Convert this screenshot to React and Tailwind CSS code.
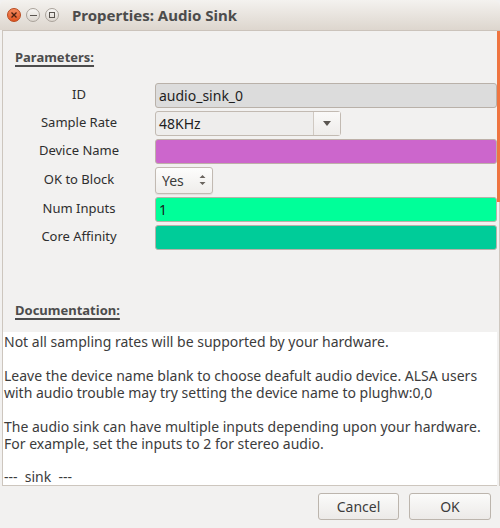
import React from "react";

const font = { fontFamily: '"Noto Sans", "Open Sans", sans-serif' };

function Row({ label, children }) {
  return (
    <div className="flex items-center">
      <div className="w-[152px] shrink-0 text-center text-[13px] text-[#2e2e2e]">{label}</div>
      <div className="flex-1 flex">{children}</div>
    </div>
  );
}

export default function App() {
  return (
    <div className="w-[500px] h-[528px] bg-[#f2f1f0] flex flex-col overflow-hidden" style={font}>
      {/* title bar */}
      <div className="h-[30px] shrink-0 flex items-center bg-gradient-to-b from-[#f4f2ef] to-[#ddd6ce] rounded-t-[6px]">
        <div className="ml-[7px] w-[14px] h-[14px] rounded-full bg-gradient-to-b from-[#f58a5e] to-[#e0541d] border border-[#b8481c] flex items-center justify-center">
          <svg width="6" height="6" viewBox="0 0 6 6"><path d="M0.5 0.5 L5.5 5.5 M5.5 0.5 L0.5 5.5" stroke="#4a2010" strokeWidth="1.3" /></svg>
        </div>
        <div className="ml-[5px] w-[14px] h-[14px] rounded-full bg-gradient-to-b from-[#f8f7f5] to-[#dcd6cf] border border-[#aaa39b] flex items-center justify-center">
          <div className="w-[7px] h-[1px] bg-[#5a5550]" />
        </div>
        <div className="ml-[5px] w-[14px] h-[14px] rounded-full bg-gradient-to-b from-[#f8f7f5] to-[#dcd6cf] border border-[#aaa39b] flex items-center justify-center">
          <div className="w-[6px] h-[6px] border border-[#5a5550]" />
        </div>
        <div className="ml-[13px] text-[15px] font-bold text-[#4c4c4c]">Properties: Audio Sink</div>
      </div>

      {/* main */}
      <div className="h-[456px] shrink-0 flex border-t border-[#cbc3bb] ml-[2px]">
        <div className="flex-1 flex flex-col border-l border-[#cdc6be]">
          <div className="h-[301px] shrink-0 flex flex-col">
            <div className="ml-[12px] mt-[17px] text-[13px] font-bold text-[#4c4c4c] underline underline-offset-[3px] decoration-[2px]">Parameters:</div>
            <div className="mt-[15px] flex flex-col gap-[3px]">
              <Row label="ID">
                <div className="flex-1 h-[25px] rounded-[3px] border border-[#b9b1a9] bg-[#dcdcdc] px-[3px] flex items-center text-[14px] text-[#1e1e1e]">audio_sink_0</div>
              </Row>
              <Row label="Sample Rate">
                <div className="w-[186px] h-[25px] flex rounded-[3px] border border-[#c2bab2] bg-[#eeedec]">
                  <div className="flex-1 px-[3px] flex items-center text-[14px] text-[#1e1e1e]">48KHz</div>
                  <div className="w-[27px] border-l border-[#d0c9c2] bg-gradient-to-b from-[#faf9f8] to-[#eeecea] flex items-center justify-center">
                    <svg width="8" height="5" viewBox="0 0 8 5"><path d="M0 0 H8 L4 5 Z" fill="#5b5651" /></svg>
                  </div>
                </div>
              </Row>
              <Row label="Device Name">
                <div className="flex-1 h-[25px] rounded-[3px] border border-[#bdb0a8] bg-[#cc66cc]" />
              </Row>
              <Row label="OK to Block">
                <div className="w-[58px] h-[27px] rounded-[3px] border border-[#c2bab2] bg-gradient-to-b from-[#fdfdfc] to-[#efedeb] shadow-[0_1px_1px_rgba(0,0,0,0.08)] flex items-center pl-[6px] pr-[6px] text-[14px] text-[#3c3c3c]">
                  <span className="flex-1">Yes</span>
                  <svg width="7" height="12" viewBox="0 0 7 12"><path d="M0.5 4 L3.5 1 L6.5 4 Z M0.5 8 L3.5 11 L6.5 8 Z" fill="#6a655f" /></svg>
                </div>
              </Row>
              <Row label="Num Inputs">
                <div className="flex-1 h-[25px] rounded-[3px] border border-[#b9b1a9] bg-[#00ff99] px-[3px] flex items-center text-[14px] text-[#1a1a1a]">1</div>
              </Row>
              <Row label="Core Affinity">
                <div className="flex-1 h-[25px] rounded-[3px] border border-[#b9b1a9] bg-[#00cc99]" />
              </Row>
            </div>
            <div className="ml-[12px] mt-[51px] text-[13px] font-bold text-[#4c4c4c] underline underline-offset-[3px] decoration-[2px]">Documentation:</div>
          </div>
          <div className="flex-1 bg-white border-b border-[#cdc6be] pl-[1px] text-[14px] leading-[17px] text-[#3c3c3c]">
            <p className="mt-[1px]">Not all sampling rates will be supported by your hardware.</p>
            <p className="mt-[17px]">Leave the device name blank to choose deafult audio device. ALSA users with audio trouble may try setting the device name to plughw:0,0</p>
            <p className="mt-[17px]">The audio sink can have multiple inputs depending upon your hardware. For example, set the inputs to 2 for stereo audio.</p>
            <p className="mt-[16px] whitespace-pre">---  sink  ---</p>
          </div>
        </div>
        <div className="w-[3px] shrink-0 flex flex-col">
          <div className="h-[171px] w-[3px] bg-[#ef7440]" />
          <div className="flex-1 w-[3px] border-r border-[#cfc8c0]" />
        </div>
      </div>

      {/* footer */}
      <div className="flex-1 flex justify-end items-start pt-[7px] pr-[9px] gap-[10px]">
        <button className="w-[81px] h-[27px] rounded-[3px] border border-[#bcb5ad] bg-gradient-to-b from-[#fbfbfa] to-[#eceae8] text-[14px] text-[#3c3c3c]">Cancel</button>
        <button className="w-[82px] h-[27px] rounded-[3px] border border-[#bcb5ad] bg-gradient-to-b from-[#fbfbfa] to-[#eceae8] text-[14px] text-[#3c3c3c]">OK</button>
      </div>
    </div>
  );
}
